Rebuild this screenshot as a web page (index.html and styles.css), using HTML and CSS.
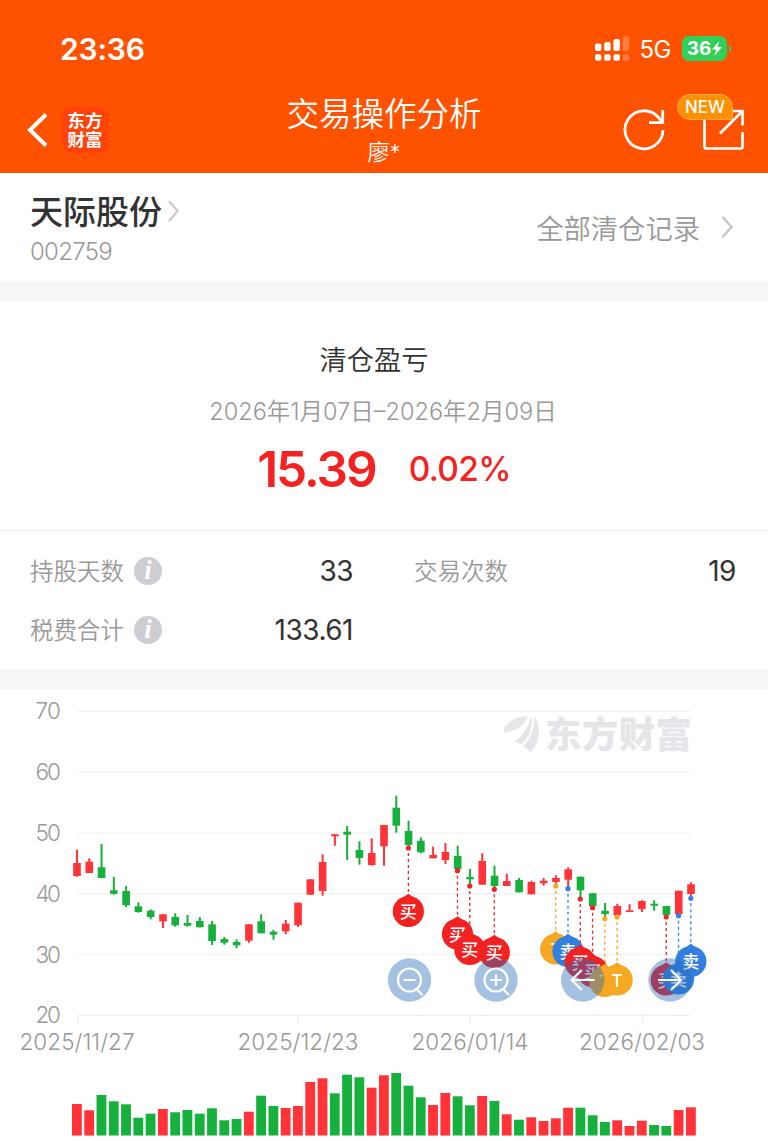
FILE: index.html
```html
<!DOCTYPE html>
<html lang="zh-CN">
<head>
  <meta charset="UTF-8">
  <title>交易操作分析</title>
  <link rel="stylesheet" href="styles.css">
</head>
<body>

  <header class="header">
    <div class="status-bar">
      <span class="clock">23:36</span>
      <div class="status-icons">
        <svg class="signal" width="36" height="26" viewBox="0 0 36 26" fill="#fff">
          <rect x="0" y="7.500" width="6.400" height="7.500" rx="2"/>
          <rect x="9.200" y="6" width="6.400" height="9" rx="2"/>
          <rect x="18.500" y="3" width="6.400" height="12" rx="2"/>
          <rect x="27.800" y="0.500" width="6.400" height="14.500" rx="2" opacity=".25"/>
          <rect x="0" y="18.200" width="6.400" height="6.500" rx="2"/>
          <rect x="9.200" y="18.200" width="6.400" height="6.500" rx="2"/>
          <rect x="18.500" y="18.200" width="6.400" height="6.500" rx="2"/>
          <rect x="27.800" y="18.200" width="6.400" height="6.500" rx="2" opacity=".25"/>
        </svg>
        <span class="network">5G</span>
        <span class="battery">36<svg width="10" height="15" viewBox="0 0 10 15"><path d="M7.300 0 0 8.600h4.200L2.500 15 10 6H5.700z" fill="#fff"/></svg></span>
        <i class="battery-tip"></i>
      </div>
    </div>

    <nav class="nav">
      <div class="nav-left">
        <svg width="22" height="36" viewBox="0 0 22 36"><path d="M20 2.500 4 18l16 15.500" fill="none" stroke="#fff" stroke-width="4"/></svg>
        <div class="app-logo">东方<br>财富</div>
      </div>
      <div class="nav-title">
        <h1>交易操作分析</h1>
        <p>廖*</p>
      </div>
      <div class="nav-right">
        <svg width="44" height="44" viewBox="0 0 44 44" fill="none" stroke="#fff" stroke-width="2.800">
          <path d="M41 22A19 19 0 1 1 36.500 9.500L40 14"/>
          <path d="M27 14.700H40.700V2"/>
        </svg>
        <div class="share">
          <svg width="44" height="44" viewBox="0 0 44 44" fill="none" stroke="#fff" stroke-width="2.700">
            <path d="M3.500 8v30.500q0 2 2 2h34q2 0 2-2V24"/>
            <path d="M28 3h13.500V17.500M41 3.500 19 25.500"/>
          </svg>
          <span class="badge">NEW</span>
        </div>
      </div>
    </nav>
  </header>

  <section class="stock">
    <div>
      <h2>天际股份<svg width="14" height="22" viewBox="0 0 14 22"><path d="M3 1l8.500 10L3 21" fill="none" stroke="#ccc" stroke-width="2.300"/></svg></h2>
      <p class="code">002759</p>
    </div>
    <div class="records">全部清仓记录<svg width="14" height="22" viewBox="0 0 14 22"><path d="M2.500 1l9 10-9 10" fill="none" stroke="#c4c4c4" stroke-width="2.300"/></svg></div>
  </section>

  <section class="summary">
    <h3>清仓盈亏</h3>
    <p class="period">2026年1月07日–2026年2月09日</p>
    <div class="profit">
      <span class="amount">15.39</span>
      <span class="rate">0.02%</span>
    </div>
  </section>

  <section class="stats">
    <div class="stat">
      <span class="label">持股天数</span><i class="info">i</i><span class="value">33</span>
    </div>
    <div class="stat">
      <span class="label">交易次数</span><span class="value">19</span>
    </div>
    <div class="stat">
      <span class="label">税费合计</span><i class="info">i</i><span class="value">133.61</span>
    </div>
  </section>

  <section class="chart">
    <svg id="kline" width="768" height="452" viewBox="0 689 768 452"></svg>
  </section>

  <script src="chart.js"></script>
</body>
</html>
```

FILE: styles.css
```css
* {
  box-sizing: border-box;
}
body {
  margin: 0;
  width: 768px;
  height: 1141px;
  overflow: hidden;
  background: #fff;
  color: #333;
  font-family: Inter, "Noto Sans CJK SC", sans-serif;
}
h1, h2, h3, p {
  margin: 0;
  font-weight: 400;
}
svg {
  display: block;
}

/* header */
.header {
  height: 173px;
  background: #ff5200;
  color: #fff;
}
.status-bar {
  display: flex;
  justify-content: space-between;
  align-items: center;
  height: 86px;
  padding: 11px 37px 0 60px;
}
.clock {
  font-size: 30px;
  font-weight: 600;
  letter-spacing: -0.2px;
}
.status-icons {
  display: flex;
  align-items: center;
}
.network {
  margin: 2px 11px 0 9px;
  font-size: 24px;
  letter-spacing: -0.5px;
}
.battery {
  display: flex;
  align-items: center;
  justify-content: center;
  gap: 1px;
  width: 45px;
  height: 25px;
  border-radius: 7px;
  background: #30d158;
  font-size: 19px;
  font-weight: 700;
}
.battery-tip {
  width: 2px;
  height: 7px;
  margin-left: 2px;
  border-radius: 0 2px 2px 0;
  background: #30d158;
}
.nav {
  display: grid;
  grid-template-columns: 1fr 220px 1fr;
  height: 87px;
}
.nav-left {
  display: flex;
  align-items: center;
  gap: 14px;
  padding: 1px 0 0 26px;
}
.app-logo {
  width: 46px;
  height: 46px;
  padding-top: 4px;
  border-radius: 9px;
  background: #ff430a;
  font-size: 17.5px;
  font-weight: 700;
  line-height: 19px;
  text-align: center;
}
.nav-title {
  text-align: center;
}
.nav-title h1 {
  margin-top: 5px;
  font-size: 32.5px;
  font-weight: 350;
  line-height: 48px;
  white-space: nowrap;
}
.nav-title p {
  font-size: 22px;
  font-weight: 350;
  line-height: 27px;
}
.nav-right {
  display: flex;
  justify-content: flex-end;
  align-items: center;
  gap: 35px;
  padding-right: 23px;
}
.share {
  position: relative;
}
.badge {
  position: absolute;
  top: -14px;
  left: -24px;
  width: 56px;
  height: 26px;
  border: 1px solid #ffab4d;
  border-radius: 13px 13px 2px 13px;
  background: #ff9100;
  font-size: 17px;
  font-weight: 500;
  line-height: 25px;
  text-align: center;
}

/* stock name */
.stock {
  display: flex;
  justify-content: space-between;
  height: 128px;
  padding: 15px 34px 0 30px;
  border-bottom: 20px solid #f7f7f7;
}
.stock h2 {
  display: flex;
  align-items: center;
  gap: 4px;
  font-size: 33px;
  font-weight: 500;
  line-height: 48px;
}
.stock h2 svg {
  margin-top: -3px;
}
.code {
  color: #999;
  font-size: 24px;
  font-weight: 350;
  line-height: 32px;
  letter-spacing: -0.7px;
}
.records {
  display: flex;
  align-items: center;
  gap: 20px;
  height: 78px;
  color: #999;
  font-size: 27.3px;
  font-weight: 350;
}

/* profit */
.summary {
  height: 230px;
  padding-top: 40px;
  border-bottom: 1px solid #f0f0f0;
  text-align: center;
}
.summary h3 {
  margin-right: 20px;
  font-size: 27.3px;
  font-weight: 350;
  line-height: 40px;
}
.period {
  margin: 13px 2px 0 0;
  color: #999;
  font-size: 23.5px;
  font-weight: 350;
  line-height: 36px;
}
.profit {
  display: flex;
  justify-content: center;
  align-items: center;
  gap: 33px;
  margin-top: 9px;
  color: #f52222;
  line-height: 60px;
}
.amount {
  font-size: 49.5px;
  font-weight: 600;
  letter-spacing: -2px;
}
.rate {
  font-size: 33.5px;
  font-weight: 500;
  letter-spacing: -0.7px;
}

/* stats */
.stats {
  display: grid;
  grid-template-columns: 323px 322px;
  column-gap: 61px;
  grid-auto-rows: 59px;
  height: 158px;
  padding: 10px 30px 0;
  border-bottom: 20px solid #f7f7f7;
}
.stat {
  display: flex;
  align-items: center;
}
.label {
  margin-top: -2px;
  color: #999;
  font-size: 23.5px;
  font-weight: 350;
}
.info {
  width: 28px;
  height: 28px;
  margin-left: 10px;
  border-radius: 50%;
  background: #cdced3;
  color: #fff;
  font: italic 700 27px/26px "Liberation Serif", serif;
  text-align: center;
}
.value {
  margin-left: auto;
  font-size: 28px;
  letter-spacing: -0.5px;
}

/* chart */
.grid {
  stroke: #f3f3f3;
  stroke-width: 1.4;
}
.axis {
  fill: #999;
  font-size: 22.5px;
  font-weight: 350;
}
.watermark {
  fill: #e5e5ea;
  font-size: 36.5px;
  font-weight: 900;
}
.pin-text {
  fill: #fff;
  font-size: 17px;
  font-weight: 500;
  text-anchor: middle;
}
.tool circle {
  fill: rgba(40, 107, 186, .42);
}
.tool path {
  fill: none;
  stroke: #fff;
  stroke-width: 2.2;
}
```

FILE: chart.js
```js
const RED = '#ff3338';
const GREEN = '#16b03c';
const colors = { r: RED, g: GREEN };
const pinColors = { '买': '#f32222', '卖': '#327fe0', 'T': '#f7a823' };

// color, high, body top, body bottom, low
const candles = [
  ['r', 849.7, 863, 876, 876.7], ['r', 858.3, 861.7, 873, 873], ['g', 844, 867.3, 878, 878],
  ['g', 877, 890.3, 893.7, 894.7], ['g', 886, 891, 905.3, 907], ['g', 902.3, 906.3, 912, 912.7],
  ['g', 909.3, 910.7, 917, 919.3], ['r', 914.3, 914.3, 921.3, 928], ['g', 913.3, 917, 925.3, 926.7],
  ['g', 915, 923, 925.7, 926.7], ['g', 917, 921, 927.3, 927.3], ['g', 921, 924.3, 941, 945],
  ['g', 937, 939, 942.7, 944.7], ['g', 939.3, 942, 945.3, 948.3], ['r', 924.3, 924.3, 940.7, 942.7],
  ['g', 914.3, 921.3, 933.3, 933.3], ['g', 930, 931.7, 934.7, 939.7], ['r', 920, 923.7, 931.3, 934.3],
  ['r', 902.7, 902.7, 925.3, 927], ['r', 879.3, 879.3, 894.7, 894.7], ['r', 854.3, 862, 891, 895.7],
  ['r', 834.3, 834.3, 836.3, 845.7], ['g', 826, 831.7, 834.7, 860], ['g', 841.3, 850, 858, 864.7],
  ['r', 838.3, 853, 865, 865.7], ['r', 825, 825, 846.3, 865.7], ['g', 795.7, 807.7, 825.7, 832.7],
  ['g', 820.7, 831, 845, 847], ['g', 837.3, 840.7, 852.3, 853.3], ['r', 846.7, 855, 858.3, 858.3],
  ['r', 843, 852, 860, 864], ['g', 845.7, 856, 869, 870], ['g', 869, 877, 879.3, 886],
  ['r', 853.3, 861, 884.7, 884.7], ['g', 865.7, 875.7, 886, 888], ['r', 874, 881, 886, 886],
  ['g', 878, 880, 892.3, 892.3], ['r', 880.7, 882, 894.3, 894.3], ['r', 878, 880.7, 883.3, 885.7],
  ['r', 875.3, 878, 882, 885], ['r', 867.3, 869.3, 879.7, 888], ['g', 876.7, 876.7, 890.3, 899],
  ['g', 893.3, 893.3, 906, 907], ['g', 903, 910.7, 914, 917], ['r', 903.7, 906, 915.3, 916],
  ['r', 904.3, 910.3, 912, 912], ['r', 900.3, 901, 909, 912], ['g', 900.3, 903.7, 905.7, 910.7],
  ['g', 906, 906, 915, 916], ['r', 890.7, 890.7, 914.3, 915], ['r', 882.3, 884.3, 894, 897]
];

const volumeColors = 'rrgggggrggggggrggrrrrgggrrggg' + 'rrggrgrgrrrrgggrrrggrr';
const volumes = [
  1104, 1110.3, 1095, 1101.3, 1104.3, 1117.7, 1113.7, 1109, 1112.3, 1110, 1113.7, 1108.3, 1120.3,
  1119, 1111.7, 1095.7, 1106, 1108, 1106, 1082, 1078.3, 1093.3, 1074.7, 1077.3, 1087.7, 1075.3,
  1073, 1085.7, 1097.3, 1105, 1093, 1096.3, 1105.3, 1096, 1101, 1114.3, 1119.7, 1117.3, 1121,
  1118.3, 1107.7, 1107.7, 1115.3, 1122, 1120.3, 1126, 1120.7, 1125, 1126, 1110, 1107.3
];

// candle index, text, dot y, pin center y
const pins = [
  [27, '买', 848, 911.5], [31, '买', 870.7, 934], [32, '买', 886, 949.5], [34, '买', 889.3, 952.5],
  [39, 'T', 886, 949], [40, '卖', 888.7, 951.5], [41, '买', 899, 962.5], [42, '买', 907.7, 971.5],
  [43, 'T', 918.7, 981.5], [44, 'T', 917, 980], [48, '买', 917, 980], [49, '卖', 915.7, 979],
  [50, '卖', 898.3, 961.5]
];

const x = i => 77 + i * 12.28;
let out = '';

// grid and axis labels
[70, 60, 50, 40, 30, 20].forEach((n, i) => {
  const y = 711.3 + i * 60.8;
  out += `<line class="grid" x1="77" x2="691" y1="${y}" y2="${y}"/>`;
  out += `<text class="axis" x="35.500" y="${y + 8}" textLength="25.500">${n}</text>`;
});
[['2025/11/27', 78, 19.5, 115], ['2025/12/23', 298, 237.5, 121], ['2026/01/14', 470, 411.5, 117], ['2026/02/03', 643, 579, 126]].forEach(([t, tick, left, w]) => {
  out += `<line class="grid" x1="${tick}" x2="${tick}" y1="1015" y2="1024.500"/>`;
  out += `<text class="axis" x="${left}" y="1050" textLength="${w}">${t}</text>`;
});

// watermark
out += `<g fill="#e5e5ea">
  <path d="M504 733v-5q6-10 24-12.500-3 10-13 14-6 2-11 3.500z"/>
  <path d="M513.500 742q13-8 18-26.500 2 14-5 23-3 4-6 6-2-3-7-2.500z"/>
  <path d="M523 747q12-13 11.500-31 11 19-4 36.500-2-4-7.500-5.500z"/>
</g>
<text class="watermark" x="545" y="748" textLength="147">东方财富</text>`;

candles.forEach(([c, high, top, bottom, low], i) => {
  const color = colors[c];
  out += `<rect x="${x(i) - 1}" y="${high}" width="2" height="${low - high}" fill="${color}"/>`;
  out += `<rect x="${x(i) - 3.8}" y="${top}" width="7.600" height="${bottom - top}" fill="${color}"/>`;
});

volumes.forEach((top, i) => {
  out += `<rect x="${x(i) - 5}" y="${top}" width="9.800" height="${1135.5 - top}" fill="${colors[volumeColors[i]]}"/>`;
});

pins.forEach(([i, text, dot, cy]) => {
  const cx = x(i) - 0.2;
  const color = pinColors[text];
  out += `<line x1="${cx}" x2="${cx}" y1="${dot + 5}" y2="${cy - 17}" stroke="${color}" stroke-width="1.300" stroke-dasharray="3 3"/>`;
  out += `<circle cx="${cx}" cy="${dot}" r="2.600" fill="${color}"/>`;
});
pins.forEach(([i, text, dot, cy]) => {
  const cx = x(i) - 0.2;
  out += `<circle cx="${cx}" cy="${cy}" r="15.600" fill="${pinColors[text]}"/>`;
  out += `<path d="M${cx} ${cy - 17.8}q4 3.500 11 6.800h-22q7-3.300 11-6.800z" fill="${pinColors[text]}"/>`;
  out += `<text class="pin-text" x="${cx}" y="${cy + 6.5}">${text}</text>`;
});

// zoom and scroll buttons
const lens = '<path d="M11.500 0a11.500 11.500 0 1 1-23 0a11.500 11.500 0 1 1 23 0M7 9l6 6';
[
  [409.5, lens + 'M-6 0H6"/>'],
  [496, lens + 'M-6 0H6M0-6V6"/>'],
  [582.7, '<path d="M12 0H-11M-1-10-11 0-1 10"/>'],
  [670, '<path d="M-12 0H11M1-10 11 0 1 10"/>']
].forEach(([cx, icon]) => {
  out += `<g class="tool" transform="translate(${cx} 980)"><circle r="21.700"/>${icon}</g>`;
});

document.getElementById('kline').innerHTML = out;
```
